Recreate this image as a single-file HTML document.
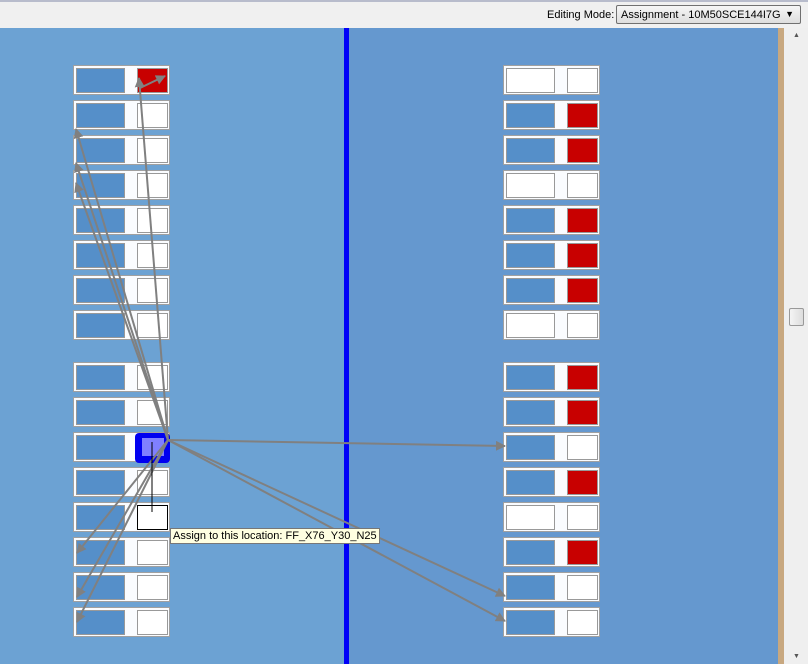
<!DOCTYPE html><html><head><style>
body{margin:0;width:808px;height:664px;overflow:hidden;font-family:"Liberation Sans",sans-serif;position:relative;background:#f0f0f0}
.top{position:absolute;left:0;top:0;width:808px;height:27px;background:#f0f0f0;border-top:2px solid #b8bccc;box-sizing:border-box}
.lbl{position:absolute;left:547px;top:7px;font-size:11px;color:#000}
.sel{position:absolute;left:616px;top:3px;width:185px;height:19px;border:1px solid #707070;border-radius:2px;background:linear-gradient(#f6f6f6,#dedede);box-sizing:border-box;font-size:11px;padding:3px 0 0 4px}
.sel span{position:absolute;right:6px;top:3px;font-size:9px}
.lp{position:absolute;left:0;top:28px;width:344px;height:636px;background:#6ca2d3}
.bl{position:absolute;left:344px;top:28px;width:5px;height:636px;background:#0000f8}
.rp{position:absolute;left:349px;top:28px;width:430px;height:636px;background:#6598cf}
.tan{position:absolute;left:778px;top:28px;width:6px;height:636px;background:#c8a880}
.sb{position:absolute;left:784px;top:28px;width:24px;height:636px;background:#efefef}
.th{position:absolute;left:789px;top:308px;width:15px;height:18px;border:1px solid #999;border-radius:2px;background:linear-gradient(90deg,#f4f4f4,#ddd);box-sizing:border-box}
.r{position:absolute;width:97px;height:30px;border:1px solid #a0a0a0;background:#fafcff;box-sizing:border-box}
.r i{position:absolute;left:2px;top:2px;width:49px;height:25px;border:1px solid #999;background:#558fc9;box-sizing:border-box}
.r b{position:absolute;left:63px;top:2px;width:31px;height:25px;border:1px solid #999;background:#fff;box-sizing:border-box}
.r b.red{background:#c80000}
.r i.w{background:#fff}
.tip{position:absolute;left:170px;top:528px;background:#ffffe1;border:1px solid #777;font-size:11px;padding:1px 2px;white-space:nowrap}
</style></head><body>
<div class="top"><div class="lbl">Editing Mode:</div><div class="sel">Assignment - 10M50SCE144I7G<span>▼</span></div></div>
<div class="lp"></div><div class="bl"></div><div class="rp"></div><div class="tan"></div><div class="sb"><div style="position:absolute;left:9px;top:4px;font-size:7px;color:#555">▲</div><div style="position:absolute;left:9px;top:625px;font-size:7px;color:#555">▼</div></div><div class="th"></div>

<div class="r" style="left:73px;top:65px"><i></i><b class="red"></b></div>
<div class="r" style="left:73px;top:100px"><i></i><b></b></div>
<div class="r" style="left:73px;top:135px"><i></i><b></b></div>
<div class="r" style="left:73px;top:170px"><i></i><b></b></div>
<div class="r" style="left:73px;top:205px"><i></i><b></b></div>
<div class="r" style="left:73px;top:240px"><i></i><b></b></div>
<div class="r" style="left:73px;top:275px"><i></i><b></b></div>
<div class="r" style="left:73px;top:310px"><i></i><b></b></div>
<div class="r" style="left:73px;top:362px"><i></i><b></b></div>
<div class="r" style="left:73px;top:397px"><i></i><b></b></div>
<div class="r" style="left:73px;top:432px"><i></i><b style="left:61px;top:0;width:35px;height:30px;border:none;background:#0000f0;border-radius:4px"></b></div>
<div style="position:absolute;left:142px;top:438px;width:22px;height:18px;background:#8080ff"></div>
<div class="r" style="left:73px;top:467px"><i></i><b></b></div>
<div class="r" style="left:73px;top:502px"><i></i><b style="border-color:#000"></b></div>
<div class="r" style="left:73px;top:537px"><i></i><b></b></div>
<div class="r" style="left:73px;top:572px"><i></i><b></b></div>
<div class="r" style="left:73px;top:607px"><i></i><b></b></div>

<div class="r" style="left:503px;top:65px"><i class="w"></i><b></b></div>
<div class="r" style="left:503px;top:100px"><i></i><b class="red"></b></div>
<div class="r" style="left:503px;top:135px"><i></i><b class="red"></b></div>
<div class="r" style="left:503px;top:170px"><i class="w"></i><b></b></div>
<div class="r" style="left:503px;top:205px"><i></i><b class="red"></b></div>
<div class="r" style="left:503px;top:240px"><i></i><b class="red"></b></div>
<div class="r" style="left:503px;top:275px"><i></i><b class="red"></b></div>
<div class="r" style="left:503px;top:310px"><i class="w"></i><b></b></div>
<div class="r" style="left:503px;top:362px"><i></i><b class="red"></b></div>
<div class="r" style="left:503px;top:397px"><i></i><b class="red"></b></div>
<div class="r" style="left:503px;top:432px"><i></i><b></b></div>
<div class="r" style="left:503px;top:467px"><i></i><b class="red"></b></div>
<div class="r" style="left:503px;top:502px"><i class="w"></i><b></b></div>
<div class="r" style="left:503px;top:537px"><i></i><b class="red"></b></div>
<div class="r" style="left:503px;top:572px"><i></i><b></b></div>
<div class="r" style="left:503px;top:607px"><i></i><b></b></div>

<svg width="808" height="664" style="position:absolute;left:0;top:0">
<defs><marker id="a" markerWidth="10" markerHeight="10" refX="9" refY="5" orient="auto" markerUnits="userSpaceOnUse"><path d="M0,0L10,5L0,10z" fill="#808080"/></marker></defs>
<g stroke="#808080" stroke-width="2" fill="none" marker-end="url(#a)">
<line x1="168" y1="440" x2="139" y2="78"/>
<line x1="140" y1="88" x2="165" y2="76"/>
<line x1="168" y1="440" x2="76" y2="129"/>
<line x1="168" y1="440" x2="76" y2="163"/>
<line x1="168" y1="440" x2="76" y2="183"/>
<line x1="168" y1="440" x2="77" y2="553"/>
<line x1="168" y1="440" x2="77" y2="597"/>
<line x1="168" y1="440" x2="77" y2="622"/>
<line x1="168" y1="440" x2="505" y2="446"/>
<line x1="168" y1="440" x2="505" y2="596"/>
<line x1="168" y1="440" x2="505" y2="621"/>
</g>
<line x1="152" y1="442" x2="152" y2="512" stroke="#000" stroke-width="1"/>
</svg>
<div class="tip">Assign to this location: FF_X76_Y30_N25</div>
</body></html>
